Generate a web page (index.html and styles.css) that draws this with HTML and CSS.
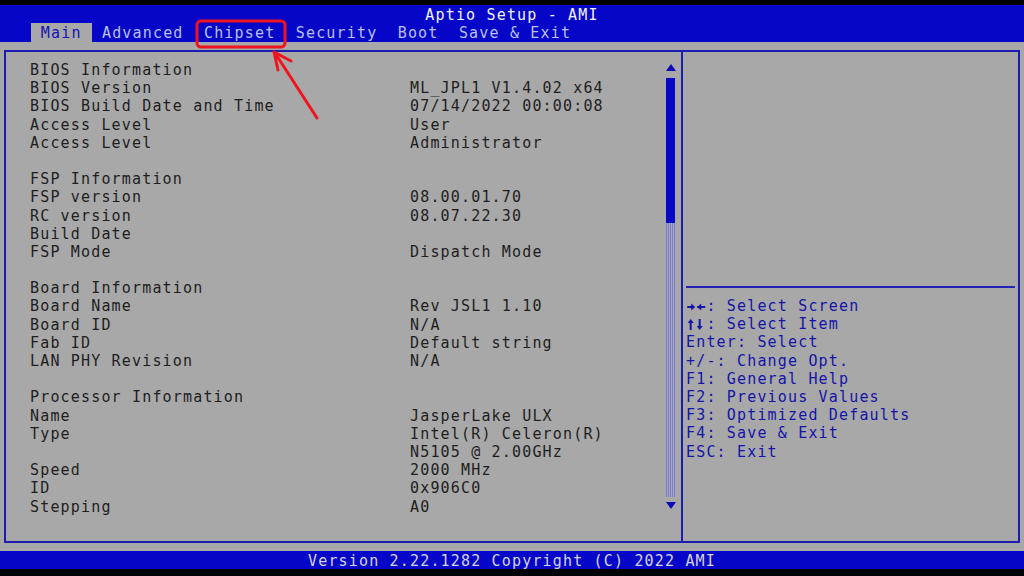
FILE: index.html
```html
<!DOCTYPE html>
<html>
<head>
<meta charset="utf-8">
<link rel="stylesheet" href="styles.css">
</head>
<body>
<div class="screen">
  <div class="topband"></div>
  <header class="header">
    <div class="title">Aptio Setup - AMI</div>
    <nav class="tabs">
      <span class="tab active">Main</span>
      <span class="tab">Advanced</span>
      <span class="tab">Chipset</span>
      <span class="tab">Security</span>
      <span class="tab">Boot</span>
      <span class="tab">Save &amp; Exit</span>
    </nav>
  </header>
  <main class="body">
    <div class="frame">
      <section class="left">
        <div class="list">
          <div class="row"><span>BIOS Information</span><span></span></div>
          <div class="row"><span>BIOS Version</span><span>ML_JPL1 V1.4.02 x64</span></div>
          <div class="row"><span>BIOS Build Date and Time</span><span>07/14/2022 00:00:08</span></div>
          <div class="row"><span>Access Level</span><span>User</span></div>
          <div class="row"><span>Access Level</span><span>Administrator</span></div>
          <div class="row"></div>
          <div class="row"><span>FSP Information</span><span></span></div>
          <div class="row"><span>FSP version</span><span>08.00.01.70</span></div>
          <div class="row"><span>RC version</span><span>08.07.22.30</span></div>
          <div class="row"><span>Build Date</span><span></span></div>
          <div class="row"><span>FSP Mode</span><span>Dispatch Mode</span></div>
          <div class="row"></div>
          <div class="row"><span>Board Information</span><span></span></div>
          <div class="row"><span>Board Name</span><span>Rev JSL1 1.10</span></div>
          <div class="row"><span>Board ID</span><span>N/A</span></div>
          <div class="row"><span>Fab ID</span><span>Default string</span></div>
          <div class="row"><span>LAN PHY Revision</span><span>N/A</span></div>
          <div class="row"></div>
          <div class="row"><span>Processor Information</span><span></span></div>
          <div class="row"><span>Name</span><span>JasperLake ULX</span></div>
          <div class="row"><span>Type</span><span>Intel(R) Celeron(R)</span></div>
          <div class="row"><span></span><span>N5105 @ 2.00GHz</span></div>
          <div class="row"><span>Speed</span><span>2000 MHz</span></div>
          <div class="row"><span>ID</span><span>0x906C0</span></div>
          <div class="row"><span>Stepping</span><span>A0</span></div>
        </div>
        <div class="scroll">
          <div class="arrow-up"></div>
          <div class="thumb"></div>
          <div class="track"></div>
          <div class="arrow-down"></div>
        </div>
      </section>
      <aside class="right">
        <div class="help-top"></div>
        <div class="sep"></div>
        <ul class="help">
          <li><svg class="glyph" width="20" height="18" viewBox="0 0 20 18" aria-label="→←"><path d="M1 10H7M11 10H19" stroke="#1414a8" stroke-width="2"/><path d="M5 6.5L9 10L5 13.5Z M15 6.5L11 10L15 13.5Z" fill="#1414a8"/></svg>: Select Screen</li>
          <li><svg class="glyph" width="20" height="18" viewBox="0 0 20 18" aria-label="↑↓"><path d="M4.5 7V15M13.5 4V12" stroke="#1414a8" stroke-width="2"/><path d="M1.5 8L4.5 4L7.5 8Z M10.5 11L13.5 15L16.5 11Z" fill="#1414a8"/></svg>: Select Item</li>
          <li>Enter: Select</li>
          <li>+/-: Change Opt.</li>
          <li>F1: General Help</li>
          <li>F2: Previous Values</li>
          <li>F3: Optimized Defaults</li>
          <li>F4: Save &amp; Exit</li>
          <li>ESC: Exit</li>
        </ul>
      </aside>
    </div>
  </main>
  <footer class="footer">Version 2.22.1282 Copyright (C) 2022 AMI</footer>
  <div class="bottomband"></div>

  <svg class="annot" width="1024" height="576" viewBox="0 0 1024 576">
    <rect x="197" y="21" width="88" height="26" rx="4" ry="4" fill="none" stroke="#f0141e" stroke-width="3"/>
    <line x1="317" y1="118" x2="275" y2="53" stroke="#f0141e" stroke-width="3" stroke-linecap="round"/>
    <polyline points="278,70 274,52 291,61" fill="none" stroke="#f0141e" stroke-width="3" stroke-linecap="round" stroke-linejoin="round"/>
  </svg>
</div>
</body>
</html>
```

FILE: styles.css
```css
* { box-sizing: border-box; }
html, body { margin: 0; padding: 0; background: #000; }
body {
  font-family: "DejaVu Sans Mono", "Liberation Mono", monospace;
  font-size: 15px;
  letter-spacing: 1.17px;
}
.screen {
  position: relative;
  width: 1024px;
  height: 576px;
  display: flex;
  flex-direction: column;
  background: #000;
  overflow: hidden;
}
.topband { height: 5px; background: #000; }
.header {
  height: 37px;
  background: #0606c8;
  display: flex;
  flex-direction: column;
}
.title {
  height: 18px;
  padding-top: 2px;
  line-height: 17px;
  text-align: center;
  color: #f2f2f2;
}
.tabs {
  height: 19px;
  display: flex;
  padding-left: 30.6px;
}
.tab {
  padding: 2px 10.2px 0;
  line-height: 17px;
  color: #b8c0e8;
  white-space: pre;
}
.tab.active {
  background: #a8a8a8;
  color: #1414b4;
}
.body {
  flex: 1;
  background: #a8a8a8;
  padding: 8px 4px 8px 4px;
  display: flex;
}
.frame {
  flex: 1;
  border: 2px solid #1c1cb0;
  display: flex;
}
.left {
  width: 675px;
  display: flex;
}
.list {
  flex: 1;
  padding: 9px 0 0 24px;
  color: #1e1e1e;
}
.row {
  height: 18.2px;
  line-height: 18.2px;
  display: grid;
  grid-template-columns: 380px 1fr;
  white-space: pre;
}
.scroll {
  width: 9px;
  margin: 12px 6px 0 0;
  display: flex;
  flex-direction: column;
  align-items: center;
}
.arrow-up {
  width: 0; height: 0;
  border-left: 5px solid transparent;
  border-right: 5px solid transparent;
  border-bottom: 7px solid #0a0ab8;
}
.arrow-down {
  width: 0; height: 0;
  margin-top: 5px;
  border-left: 5px solid transparent;
  border-right: 5px solid transparent;
  border-top: 7px solid #0a0ab8;
}
.thumb {
  width: 9px;
  height: 145px;
  margin-top: 7px;
  background: #0808c8;
}
.track {
  width: 9px;
  height: 274px;
  background-color: #a8a8b4;
  background-image:
    repeating-linear-gradient(90deg, #7c7cd0 0 1px, transparent 1px 2px),
    repeating-linear-gradient(0deg, rgba(168,168,180,0.6) 0 1px, transparent 1px 2px);
}
.right {
  flex: 1;
  border-left: 2px solid #1c1cb0;
  display: flex;
  flex-direction: column;
  padding: 0 3px 0 3px;
}
.help-top { height: 234px; }
.sep {
  height: 2px;
  background: #2424b4;
}
.help {
  list-style: none;
  margin: 9px 0 0 0;
  padding: 0;
  color: #1414a8;
}
.help li {
  height: 18.2px;
  line-height: 18.2px;
  white-space: pre;
  display: flex;
  align-items: center;
}
.glyph {
  display: block;
  width: 20.4px;
  height: 18px;
  flex: none;
}
.footer {
  height: 18px;
  background: #0606c8;
  color: #d4d4dc;
  text-align: center;
  line-height: 20px;
}
.bottomband { height: 7px; background: #000; }
.annot {
  position: absolute;
  left: 0;
  top: 0;
  pointer-events: none;
}
```
